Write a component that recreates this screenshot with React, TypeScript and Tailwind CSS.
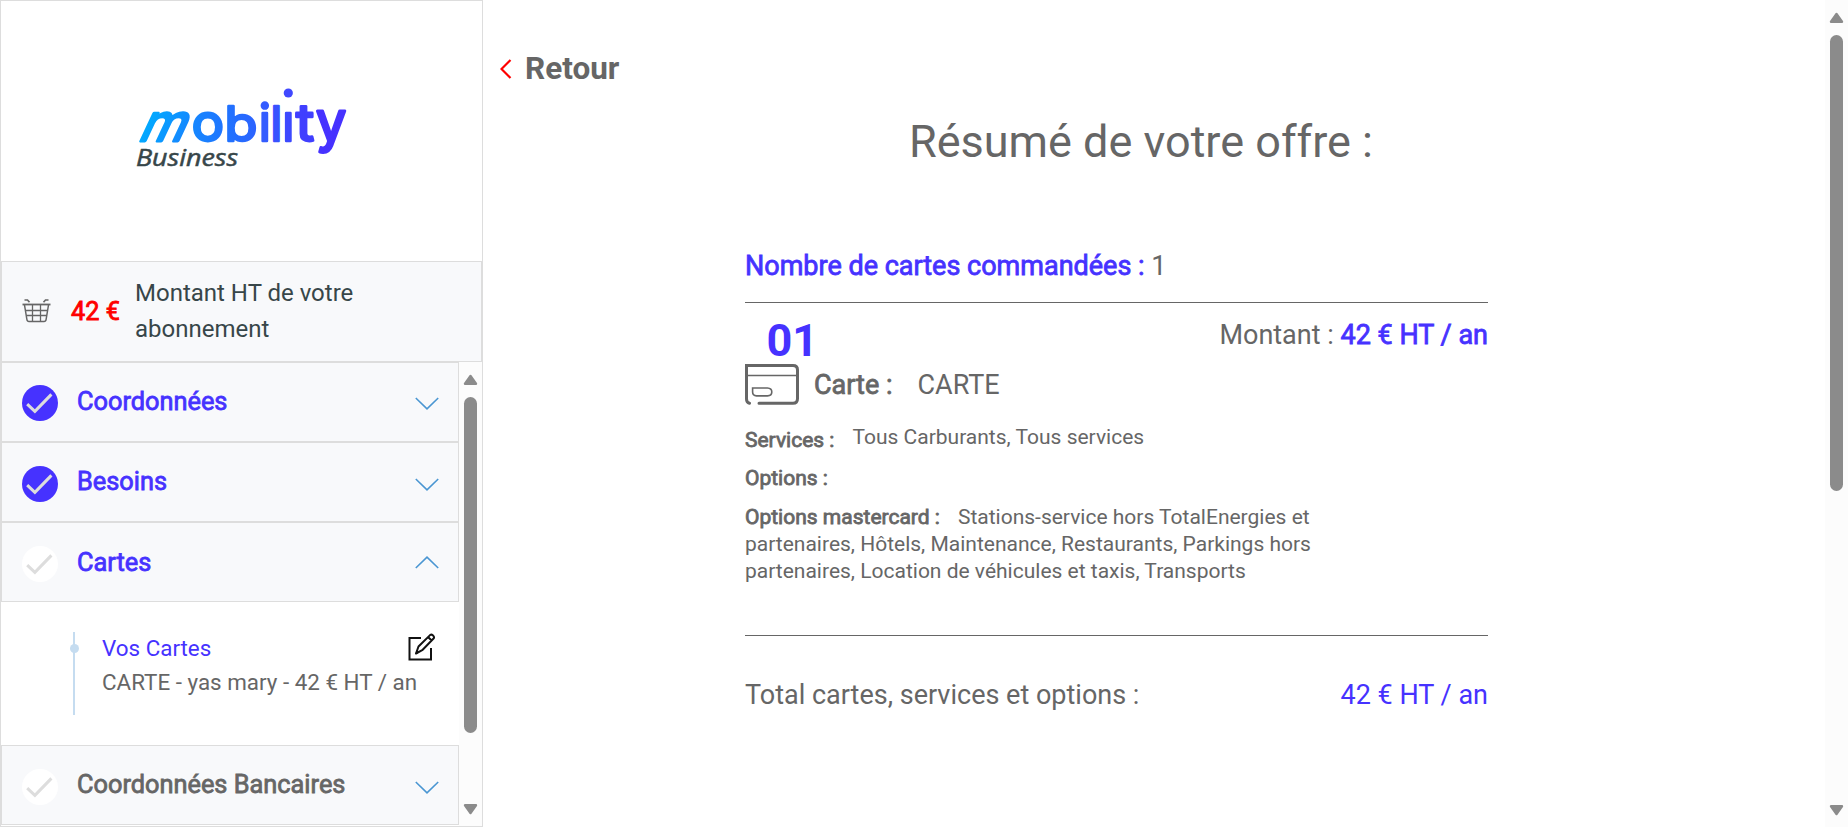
import React from "react";

const faux = "[-webkit-text-stroke:0.8px_currentColor]";

function Arrow({ down }: { down?: boolean }) {
  return (
    <svg width="15" height="12" viewBox="0 0 15 12" className={down ? "rotate-180" : ""}>
      <path d="M7.5 2 L13 9.8 H2 Z" fill="#8b8b8b" stroke="#8b8b8b" strokeWidth="2.4" strokeLinejoin="round" />
    </svg>
  );
}

function Check({ done }: { done?: boolean }) {
  return (
    <svg width="36" height="36" viewBox="0 0 36 36" className="block shrink-0">
      <circle cx="18" cy="18" r="18" fill={done ? "#4632ff" : "#ffffff"} />
      <path d="M5.2 19.2 L12.9 26.4 L29.4 9.4" fill="none" stroke="#dddddd" strokeWidth="3" />
    </svg>
  );
}

function Chevron({ up }: { up?: boolean }) {
  return (
    <svg width="24" height="14" viewBox="0 0 24 14" className={up ? "rotate-180" : ""}>
      <path d="M0.8 1 L12 11.8 L23.2 1" fill="none" stroke="#4a96d2" strokeWidth="1.6" />
    </svg>
  );
}

function Step({ label, done, active, up, first }: { label: string; done?: boolean; active?: boolean; up?: boolean; first?: boolean }) {
  return (
    <div className="flex h-20 w-[458px] shrink-0 items-center border border-[#dddddd] bg-[#f8f9fb] pl-5 pr-[19px]">
      <div className={first ? "pt-px" : "pt-[3px]"}>
        <Check done={done} />
      </div>
      <div className={`ml-[19px] flex-1 whitespace-nowrap text-[25.35px] leading-[38px] ${faux} ${up ? "" : "pb-0.5"} ${active ? "text-[#4632ff]" : "text-[#666666]"}`}>
        {label}
      </div>
      <div className={up ? "pb-px" : first ? "pt-1" : "pt-[5px]"}>
        <Chevron up={up} />
      </div>
    </div>
  );
}

function Logo() {
  return (
    <svg width="240" height="90" viewBox="112 84 240 90" className="block">
      <defs>
        <linearGradient id="m" x1="0" x2="1" y1="0" y2="0">
          <stop offset="0" stopColor="#00aaff" />
          <stop offset="1" stopColor="#1588ff" />
        </linearGradient>
        <linearGradient id="o" x1="0" x2="1" y1="0" y2="0">
          <stop offset="0" stopColor="#1588ff" />
          <stop offset="1" stopColor="#1f74ff" />
        </linearGradient>
        <linearGradient id="b" x1="0" x2="1" y1="0" y2="0">
          <stop offset="0" stopColor="#1f74ff" />
          <stop offset="1" stopColor="#2d62ff" />
        </linearGradient>
        <clipPath id="stem">
          <rect x="-10" y="-28.500" width="20" height="40" />
        </clipPath>
      </defs>
      <g fontFamily="Inter, sans-serif" fontWeight="400" fontSize="48" strokeWidth="2.600" strokeLinejoin="round" strokeLinecap="round" textAnchor="middle">
        <text transform="translate(159.500 140.700) skewX(-25) scale(1.080 1.060)" fill="url(#m)" stroke="url(#m)">m</text>
        <text transform="translate(207.800 140.700) scale(1.120 1.060)" fill="url(#o)" stroke="url(#o)">o</text>
        <text transform="translate(241 140.700) scale(1.120 1)" fill="url(#b)" stroke="url(#b)">b</text>
        <text transform="translate(264.800 140.700) scale(1 1.050)" fill="#345cff" stroke="#345cff">i</text>
        <text transform="translate(276.300 140.700) scale(1 1)" fill="#3852ff" stroke="#3852ff">l</text>
        <text transform="translate(288.300 140.700) scale(1 1.050)" fill="#3c49ff" stroke="#3c49ff" clipPath="url(#stem)">i</text>
        <text transform="translate(305 140.700) scale(1.150 1.080)" fill="#403fff" stroke="#403fff">t</text>
        <text transform="translate(331 140.700) scale(1.120 1.160)" fill="#4632ff" stroke="#4632ff">y</text>
      </g>
      <circle cx="288.300" cy="93" r="4.600" fill="#4048ff" />
      <text x="136" y="166" fontFamily="Open Sans, sans-serif" fontStyle="italic" fontWeight="500" fontSize="23.500" fill="#374649" stroke="#374649" strokeWidth="0.500" textLength="102" lengthAdjust="spacingAndGlyphs">
        Business
      </text>
    </svg>
  );
}

function Basket() {
  return (
    <svg width="29" height="24" viewBox="0 0 29 24" fill="none" stroke="#666666" strokeWidth="1.300" className="block shrink-0">
      <path d="M0.500 5.500 H28.500" strokeWidth="1.800" />
      <path d="M2.500 6 L4.900 20.500 Q5.200 22.600 7 22.600 H22 Q23.800 22.600 24.100 20.500 L26.500 6" strokeWidth="1.500" />
      <path d="M3.500 11.500 H25.500 M4.300 16.500 H24.700 M10.500 6 V22.500 M18.500 6 V22.500" />
      <path d="M2.500 1 H5.500 L7.500 3.200 M26.500 1 H23.500 L21.500 3.200" strokeWidth="1.700" />
    </svg>
  );
}

function Edit() {
  return (
    <svg width="28" height="28" viewBox="0 0 28 28" fill="none" stroke="#111111" strokeWidth="2" className="block">
      <path d="M13 5 H1.500 V26.500 H23 V15" />
      <path d="M8 20.500 L10.500 13.500 L22.300 1.900 Q23.500 1.200 24.800 2.200 Q26.600 3.800 25.800 5.300 L14.200 17.200 Z M20.300 4.300 L23.600 7.500" strokeLinejoin="round" />
      <path d="M9 17.500 L11 19.300 L8 20.500 Z" fill="#111111" strokeWidth="1" />
    </svg>
  );
}

function Card() {
  return (
    <svg width="54" height="41" viewBox="0 0 54 41" fill="none" stroke="#666666" strokeWidth="3" strokeLinecap="round" className="block shrink-0">
      <path d="M4.500 39.300 Q1.500 38.500 1.500 35 V1.600 H48 Q52.500 1.600 52.500 6 V34.500 Q52.500 39.300 48 39.300 H14" />
      <path d="M2 11.600 H52" strokeWidth="1.500" />
      <path d="M7.600 24 H22.500 Q26.800 24.200 26.800 28 Q26.800 31.800 22.500 31.900 H11.500 Q7.600 31.500 7.600 28 Z" strokeWidth="1.600" />
    </svg>
  );
}

export default function App() {
  return (
    <div className="flex h-[827px] w-[1848px] overflow-hidden bg-white font-['Roboto',sans-serif] text-[#666666]">
      <aside className="flex h-[827px] w-[483px] shrink-0 flex-col border border-[#dddddd]">
        <div className="h-[260px] shrink-0 pl-[111px] pt-[83px]">
          <Logo />
        </div>
        <div className="flex h-[101px] shrink-0 items-center border border-[#dddddd] bg-[#f8f9fb] pl-5">
          <div className="pb-px">
            <Basket />
          </div>
          <div className={`ml-5 w-[50px] whitespace-nowrap pb-px text-[25.35px] leading-9 text-[#ff0000] ${faux}`}>42 €</div>
          <div className="ml-3.5 w-[240px] pb-px text-2xl leading-9 text-[#374649]">Montant HT de votre abonnement</div>
        </div>
        <div className="flex min-h-0 flex-1">
          <div className="flex w-[458px] flex-col">
            <Step label="Coordonnées" done active first />
            <Step label="Besoins" done active />
            <Step label="Cartes" active up />
            <div className="flex h-[143px] shrink-0 pl-[68px] pt-[30px]">
              <div className="flex h-[83px] w-[9px] justify-center">
                <div className="w-0.5 bg-[#c5dcf0]">
                  <div className="-ml-[3px] mt-3 h-[9px] w-[9px] rounded-full bg-[#c5dcf0]" />
                </div>
              </div>
              <div className="-mt-px ml-6 w-[306px] whitespace-nowrap text-[22.4px] leading-[34px]">
                <div className="text-[#4632ff]">Vos Cartes</div>
                <div>CARTE - yas mary - 42 € HT / an</div>
              </div>
              <div className="pt-px">
                <Edit />
              </div>
            </div>
            <Step label="Coordonnées Bancaires" />
          </div>
          <div className="flex flex-1 flex-col items-center bg-[#fcfcfc] pb-[11px] pt-3">
            <Arrow />
            <div className="mt-[11px] h-[336px] w-[13px] rounded-full bg-[#8b8b8b]" />
            <div className="mt-auto">
              <Arrow down />
            </div>
          </div>
        </div>
      </aside>

      <main className="flex flex-1 flex-col">
        <div className="flex h-[137px] shrink-0 items-center pl-[17px]">
          <svg width="12" height="20" viewBox="0 0 12 20">
            <path d="M10.500 1 L1.500 10 L10.500 19" fill="none" stroke="#ff0000" strokeWidth="2.200" />
          </svg>
          <span className="ml-[13px] pt-px text-[31.5px] font-bold leading-10">Retour</span>
        </div>
        <h1 className="-mt-[26px] pl-[426px] text-[45px] leading-[61px]">Résumé de votre offre :</h1>
        <div className="ml-[262px] mt-[74px] w-[743px] text-[27px]">
          <div className="h-[57px] border-b border-[#666666] leading-[41px]">
            <span className={`text-[#4632ff] ${faux}`}>Nombre de cartes commandées :</span> 1
          </div>
          <div className="flex justify-between pl-[21.5px]">
            <span className="pt-[13px] text-[45px] font-bold leading-[50px] text-[#4632ff]">01</span>
            <span className="pt-[12px] leading-10">
              Montant : <span className={`text-[#4632ff] ${faux}`}>42 € HT / an</span>
            </span>
          </div>
          <div className="-mt-0.5 flex h-[41px] items-center">
            <Card />
            <span className={`ml-[15px] pt-0.5 ${faux}`}>Carte :</span>
            <span className="ml-[25px] pt-0.5">CARTE</span>
          </div>
          <div className="mt-[19px] flex text-[21px] leading-[27px]">
            <span className={`pt-[3px] ${faux}`}>Services :</span>
            <span className="ml-[18px]">Tous Carburants, Tous services</span>
          </div>
          <div className={`mt-[11px] text-[21px] leading-[27px] ${faux}`}>Options :</div>
          <div className="mt-3 h-[131px] text-[21px] leading-[27px]">
            <span className={`mr-[18px] ${faux}`}>Options mastercard :</span>Stations-service hors TotalEnergies et
            <br />
            partenaires, Hôtels, Maintenance, Restaurants, Parkings hors
            <br />
            partenaires, Location de véhicules et taxis, Transports
          </div>
          <div className="flex justify-between border-t border-[#666666] pt-[39px] leading-10">
            <span>Total cartes, services et options :</span>
            <span className="text-[#4632ff]">42 € HT / an</span>
          </div>
        </div>
      </main>

      <div className="flex w-[23px] shrink-0 flex-col items-center bg-[#fcfcfc] pb-[11px] pt-3">
        <Arrow />
        <div className="mt-[11px] h-[456px] w-[13px] rounded-full bg-[#8b8b8b]" />
        <div className="mt-auto">
          <Arrow down />
        </div>
      </div>
    </div>
  );
}
